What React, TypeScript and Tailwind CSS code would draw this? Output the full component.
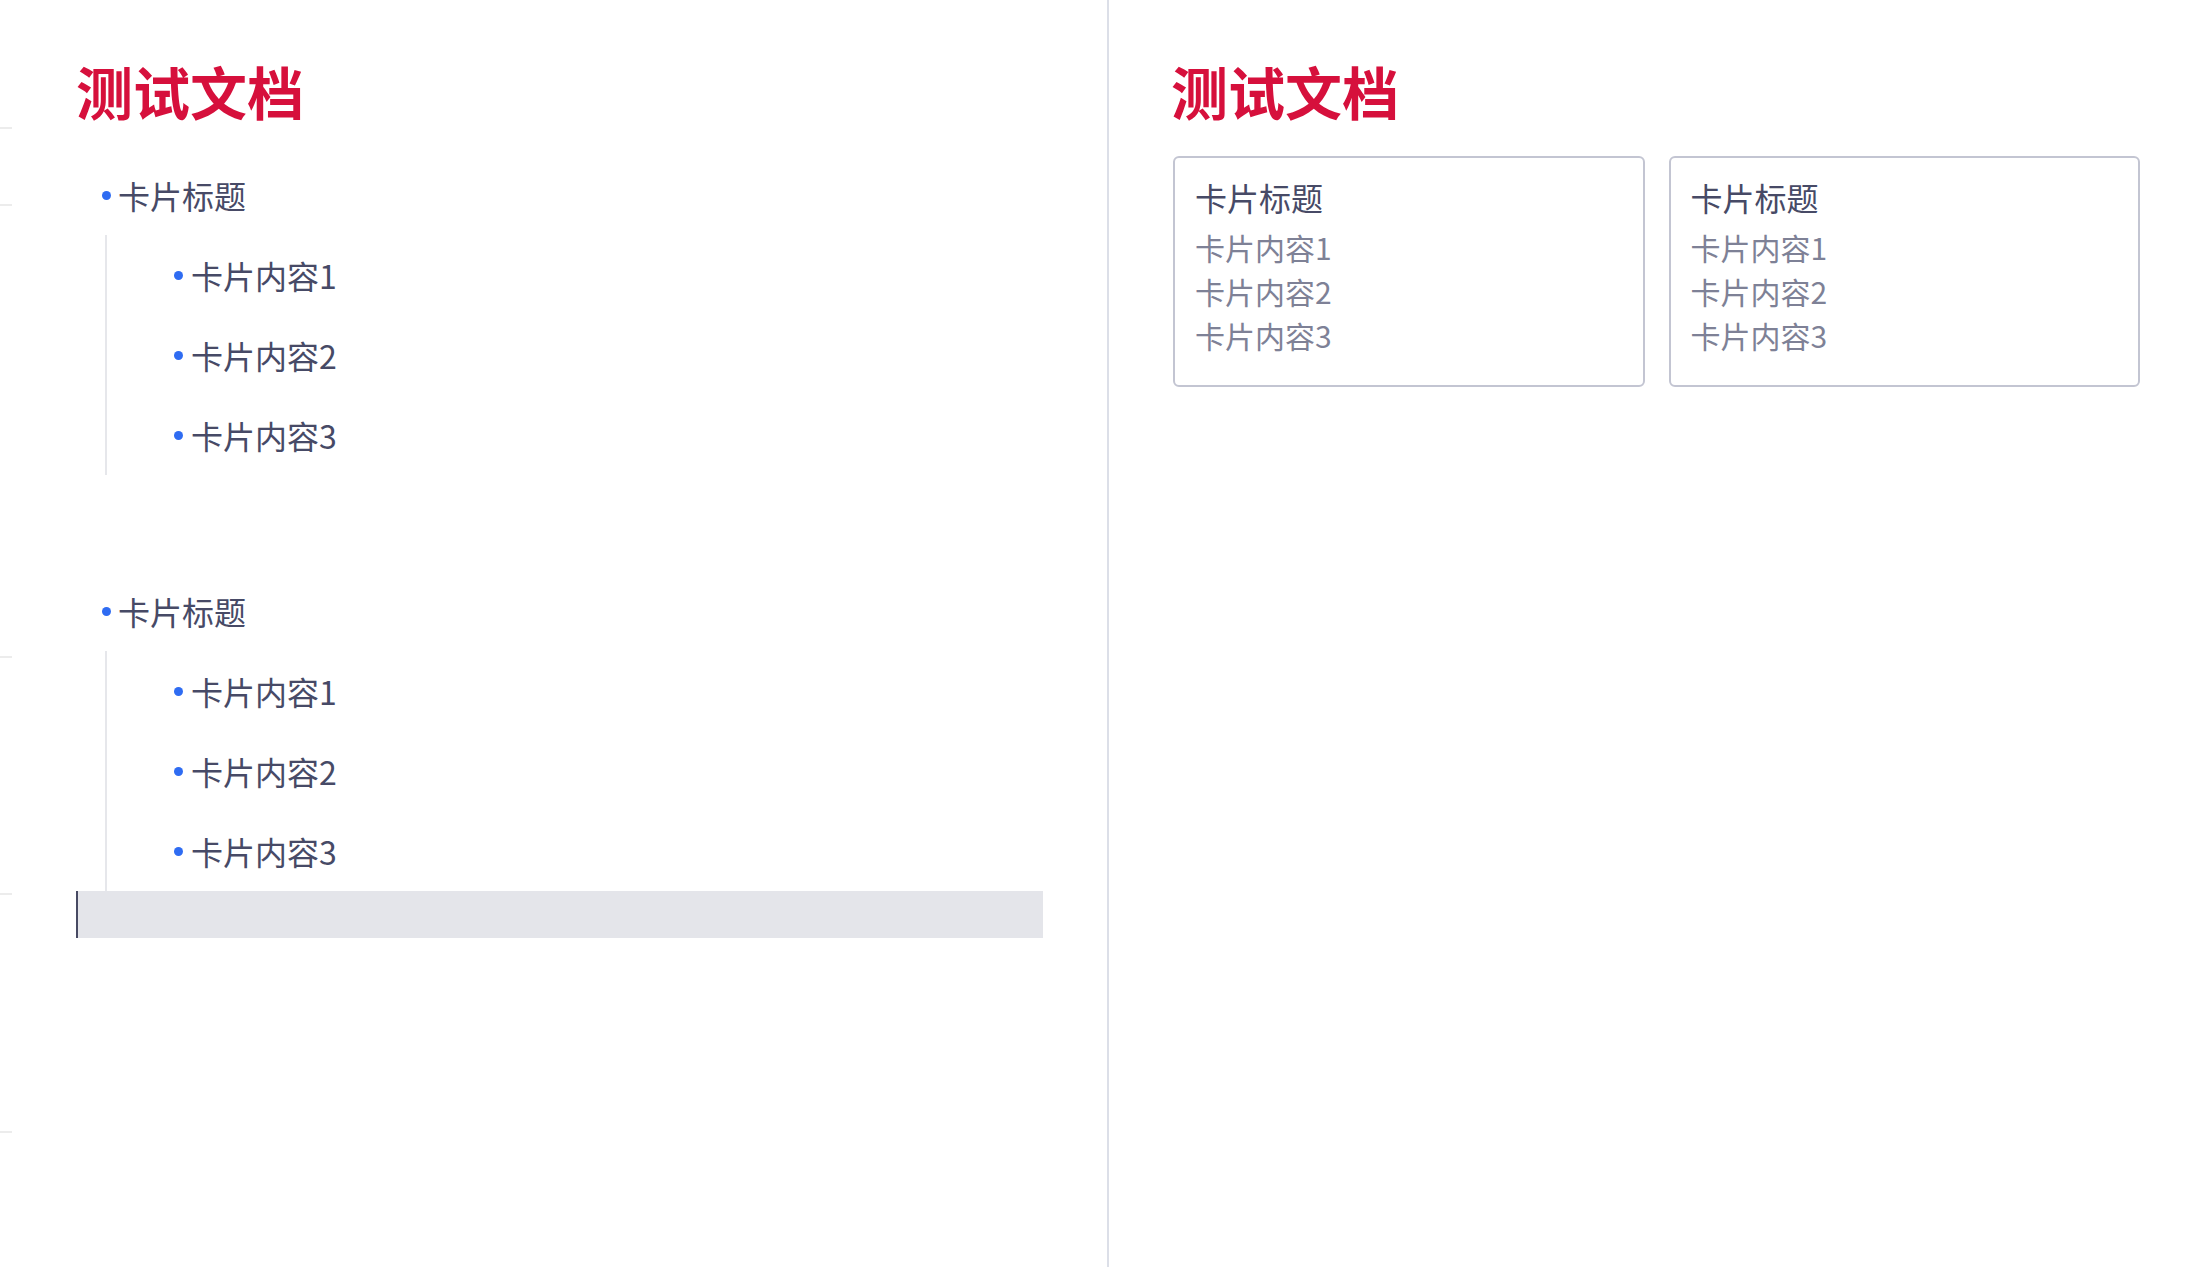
const font = { fontFamily: '"Noto Sans CJK SC", "Noto Sans", sans-serif' };

const ticks = [127, 204, 656, 893, 1131];

const Bullet = () => <span className="w-[9px] h-[9px] rounded-full bg-[#2f6cf2] shrink-0" />;

const ListGroup = () => (
  <div>
    <div className="h-[80px] flex items-center pl-[26px] gap-[7px]">
      <Bullet />
      <span className="text-[32px] leading-[80px] text-[#474a66]">卡片标题</span>
    </div>
    <div className="ml-[29px] border-l-2 border-[#e6e7eb]">
      {["卡片内容1", "卡片内容2", "卡片内容3"].map((t) => (
        <div key={t} className="h-[80px] flex items-center pl-[67px] gap-[8px]">
          <Bullet />
          <span className="text-[32px] leading-[80px] text-[#474a66]">{t}</span>
        </div>
      ))}
    </div>
  </div>
);

const Card = () => (
  <div className="border-2 border-[#c3c5d2] rounded-md pt-[17px] pb-[28px] pl-5">
    <div className="text-[32px] leading-[44px] text-[#474a66]">卡片标题</div>
    <div className="mt-[6px]">
      {["卡片内容1", "卡片内容2", "卡片内容3"].map((t) => (
        <div key={t} className="text-[30px] leading-[44px] text-[#7e8196]">
          {t}
        </div>
      ))}
    </div>
  </div>
);

export default function App() {
  return (
    <div className="flex w-[2190px] h-[1267px] bg-white overflow-hidden" style={font}>
      {/* Editor */}
      <div className="relative w-[1109px] shrink-0 border-r-2 border-[#dcdfe8] pl-[76px] pr-[64px]">
        {ticks.map((y) => (
          <div key={y} className="absolute left-0 w-3 h-[2px] bg-[#ececec]" style={{ top: y }} />
        ))}
        <h1 className="pt-[50px] h-[130px] text-[57px] leading-[80px] font-bold text-[#d6103c]">测试文档</h1>
        <div className="mt-[25px]">
          <ListGroup />
        </div>
        <div className="mt-[96px]">
          <ListGroup />
        </div>
        <div className="h-[47px] bg-[#e4e5ea] border-l-2 border-[#474a63]" />
      </div>

      {/* Preview */}
      <div className="flex-1 pl-[64px] pr-[50px]">
        <h1 className="pt-[50px] h-[130px] -ml-[2px] text-[57px] leading-[80px] font-bold text-[#d6103c]">测试文档</h1>
        <div className="mt-[26px] grid grid-cols-2 gap-[24px]">
          <Card />
          <Card />
        </div>
      </div>
    </div>
  );
}
